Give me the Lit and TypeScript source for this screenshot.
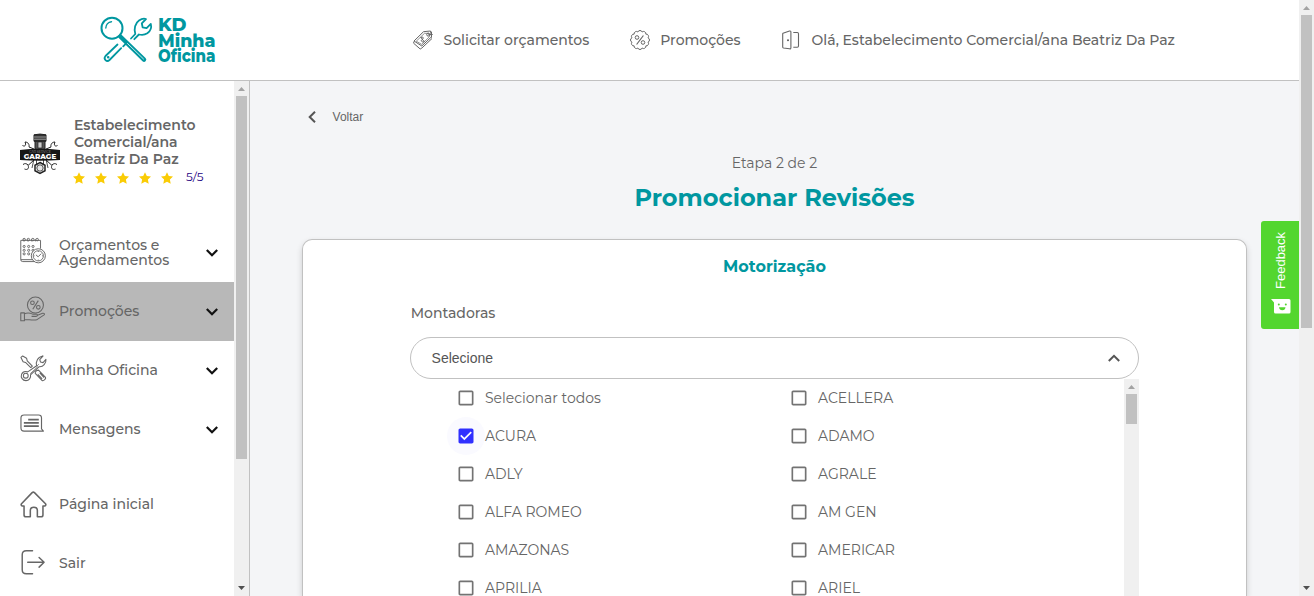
import { LitElement, html, css, svg } from "lit";
import { customElement, property } from "lit/decorators.js";
import { classMap } from "lit/directives/class-map.js";

@customElement("scroll-track")
class ScrollTrack extends LitElement {
  @property({ type: Number }) thumb = 30;
  @property({ type: Boolean }) endless = false;
  static styles = css`
    :host { display: flex; flex-direction: column; width: 15px; flex: none; background: #f0f0f0; }
    .btn { height: 15px; width: 15px; flex: none; display: block; }
    .thumb { width: 11px; margin: 0 2px; background: #c1c1c1; flex: none; }
    .rest { flex: 1; }
  `;
  render() {
    return html`
      <svg class="btn" viewBox="0 0 15 15"><path d="M4 10 7.5 6 11 10z" fill="#a3a3a3" /></svg>
      <div class="thumb" style="height:${this.thumb}px"></div>
      <div class="rest"></div>
      ${this.endless ? "" : html`<svg class="btn" viewBox="0 0 15 15"><path d="M4 5h7L7.5 9z" fill="#505050" /></svg>`}
    `;
  }
}

const logo = html`<svg class="logo" viewBox="0 0 118 50" fill="none" stroke="#0097a0" stroke-width="2" stroke-linecap="round" stroke-linejoin="round">
  <circle cx="12" cy="13.200" r="10.500" stroke-width="2" />
  <path d="M5.800 13a6.500 6.500 0 0 1 5.700-6.300" stroke-width="1.400" />
  <path d="M20.300 21.500 44 44.600" stroke-width="4.400" />
  <path d="M27.500 28.500 43.500 44" stroke="#fff" stroke-width=".8" />
  <path d="M31 23.500 35.300 19C33.600 13.700 35.300 8 39 5.500c2.300-1.600 4.800-2.200 7-1.500L41.800 8.300l.8 4 4 .8 4.200-4.200c.9 3.400-.6 7.200-3.500 9.400-2.900 2-5.500 2-8.400 1.200L34.300 24.200" stroke-width="1.800" />
  <path d="M21.200 33.200 9.500 45c-2.800 2.500-6.500-1-4-4L17.500 29.500M23.200 31.300l3-3" stroke-width="1.800" />
  <circle cx="8.200" cy="42.300" r=".7" stroke-width="1.200" />
  <g class="brand-name" fill="#0097a0" stroke="none">
    <text x="58" y="15.800" textLength="28.500" lengthAdjust="spacingAndGlyphs">KD</text>
    <text x="58" y="31.500" textLength="57.500" lengthAdjust="spacingAndGlyphs">Minha</text>
    <text x="58" y="47.200" textLength="57.500" lengthAdjust="spacingAndGlyphs">Oficina</text>
  </g>
</svg>`;

const tags = html`<svg class="nav-icon" viewBox="0 0 20 20" fill="none" stroke="#666" stroke-width="1">
  <path d="M1 11 10.500 1.700 17.500 1l1 5.800L8.800 16z" /><path d="M.8 11.500.7 13.300 7.200 19l1.700-1L19 8.500" />
  <path d="M3.300 11.200 11.500 3.300l4.500.1.500 3.200-7.800 7.800z" stroke-width=".7" />
  <circle cx="15.200" cy="4.600" r="1.500" /><path d="M15.500 4.500h4.200M18.500 1.700v6M8 7.500c2-1 3 .4 2 1.300s-2.500 1.500-1.300 2.600 2.200.4 2.600-.1M7.500 7l4 5" />
</svg>`;

const scallop = () => {
  const n = 12;
  let d = "";
  for (let i = 0; i <= n; i++) {
    const a = (i / n) * Math.PI * 2 + Math.PI / 12;
    const x = (10 + 8.3 * Math.cos(a)).toFixed(2);
    const y = (10 + 8.3 * Math.sin(a)).toFixed(2);
    d += i ? `A2.300 2.300 0 0 1 ${x} ${y}` : `M${x} ${y}`;
  }
  return d;
};
const badge = html`<svg class="nav-icon" viewBox="0 0 20 20" fill="none" stroke="#666" stroke-width="1">
  <path d=${scallop()} /><path d="M13.400 5.500 6.600 14.500" stroke-width="1.200" />
  <circle cx="7" cy="7.500" r="1.800" /><circle cx="13" cy="12.500" r="1.800" />
</svg>`;

const door = html`<svg class="nav-icon" viewBox="0 0 20 20" fill="none" stroke="#666" stroke-width="1.100" stroke-linejoin="round">
  <path d="M2 3.200 8.500 1Q9.900.8 9.900 2v15.800q0 1.300-1.400 1L2.500 18Q1.700 17.800 1.700 17V4q0-.6.3-.8zM12.300 2.500h4q1.200 0 1.200 1.200V16q0 1.200-1.200 1.200h-4" />
  <circle cx="7" cy="10.200" r=".5" fill="#666" />
</svg>`;

const calendar = html`<svg class="side-icon" viewBox="0 0 28 28" fill="none" stroke="#666" stroke-width="1">
  <path d="M14.500 23.500H.8V3.500h20.500v8.500M.8 23.500q0 2 2 2h12.500" />
  <path d="M4 2.500v2M8 2.500v2M12 2.500v2M16 2.500v2" /><circle cx="4.300" cy="2.700" r="1.300" /><circle cx="8.700" cy="2.700" r="1.300" /><circle cx="13.300" cy="2.700" r="1.300" /><circle cx="17.800" cy="2.700" r="1.300" />
  ${[9.8, 13.8, 17.5].map((y) => [4.3, 9, 13.5].map((x) => (x > 12 && y > 15 ? "" : svg`<circle cx=${x} cy=${y} r="1.100" />`)))}
  <circle cx="19" cy="19.500" r="7.300" fill="#fff" /><circle cx="19" cy="19.500" r="5.300" stroke-width=".9" />
  <path d="m16.500 18.500 2.300 2 3.200-3.200M19 14.500v1M19 23.500v1M14 19.500h1M23 19.500h1" />
</svg>`;

const hand = html`<svg class="side-icon" viewBox="0 0 28 28" fill="none" stroke="#666" stroke-width="1.100" stroke-linejoin="round">
  <circle cx="16" cy="9.300" r="8.300" /><path d="m19 4.800-5.800 9" />
  <circle cx="12.900" cy="7" r="1.900" /><circle cx="19" cy="11.700" r="1.900" />
  <path d="M.8 17.500h3.800v8.200H.8zM4.600 18.500c3.500-1.500 6-.8 8.500.3h4.200c1.300.5 1.300 2-.3 2.300h-5M17.500 20.300 23.500 18c1.500-.4 2.500.6 1.500 1.600L18 24.300c-3 1.500-8.500 0-13.400 0" />
</svg>`;

const tools = html`<svg class="side-icon" viewBox="0 0 28 28" fill="none" stroke="#666" stroke-width="1.100" stroke-linejoin="round">
  <path d="M1 2.500 2.800 1l4 2.300.7 2.700 5.300 5.500-1.600 1.500L5.700 7.700 3.200 7z" />
  <path d="m17.500 16 1.700-.3 7.300 7.500c.6 1.300-1.800 4-3.500 3.300l-7.200-7.500.2-1.600zM20.500 18.500l4.500 5M18.500 20l4.500 4.800" />
  <path d="M17.300 11.200C16 7 18.500 1.500 24 1l-3.500 3.700.8 2.600 2.600.6 3-3.300c.5 4-3 8-7 7.500l-9 8.500c.7 3-1.600 6-4.700 6-3.500 0-5.700-3.500-4.600-6.500.9-2.300 3.600-3.500 6.400-2.600z" fill="#fff" />
  <path d="m18.500 12-8 7.500M19.500 9.500l-2 2" stroke-width=".8" /><circle cx="6" cy="21.500" r="2.500" />
</svg>`;

const message = html`<svg class="side-icon" viewBox="0 0 28 28" fill="none" stroke="#666" stroke-width="1.200" stroke-linejoin="round">
  <path d="M22.300 15.500V4.200Q22.300 1 19.300 1H4.200Q1 1 1 4.200v10.300q0 3.200 3.200 3.200h20.100z" />
  <path d="M8.500 5.800h11M4 9.200h15.500M4 12.600h15.500" stroke-width="1.700" />
</svg>`;

const home = html`<svg class="side-icon home" viewBox="0 0 28 28" fill="none" stroke="#666" stroke-width="1.600" stroke-linejoin="round" stroke-linecap="round">
  <path d="M4.200 15.500H2.300Q.3 14.600 1.800 13L12.600 1.700q1.200-1 2.400 0L26.200 13q1.500 1.600-.5 2.500h-1.900v9.300q0 2-2 2h-3.800v-6.500c0-4.500-7.300-4.500-7.300 0v6.500h-4.500q-2 0-2-2z" />
</svg>`;

const exit = html`<svg class="side-icon exit" viewBox="0 0 28 28" fill="none" stroke="#666" stroke-width="1.500" stroke-linejoin="round" stroke-linecap="round">
  <path d="M13 1.800H6.500Q2.300 1.800 2.300 6v15.500q0 4.200 4.200 4.200H13M8 13.800h17M19.800 8.800l5.200 5-5.200 5" />
</svg>`;

const chevron = html`<svg class="chevron" viewBox="0 0 12 8" fill="none" stroke="#111" stroke-width="2.200"><path d="m.8 1 5.200 5.200L11.200 1" /></svg>`;

const garage = html`<svg class="garage" viewBox="0 0 40 40" fill="none" stroke="#222" stroke-width="1">
  <path d="M14 .8q6-1.500 12 0v6.500H14z" fill="#333" /><path d="M14 3h12M14 5.200h12" stroke="#bbb" stroke-width=".8" /><path d="M15 7.300h10v8H15z" fill="#555" /><path d="M18 8h4v6h-4z" fill="#ccc" stroke-width=".7" />
  <path d="M2.500 11.500C5 13 6.500 11 5 8c3.500 0 4.500 3 4 5l5 2M37.500 11.500C35 13 33.500 11 35 8c-3.500 0-4.500 3-4 5l-5 2M4.500 35c3 1.500 5-1 3.500-3.500L15 25M35.500 35c-3 1.500-5-1-3.500-3.500L25 25M3 30.500c2-1.500 3.500-1 5 .5M37 30.500c-2-1.500-3.500-1-5 .5" />
  <path d="M14 25 12 34M26 25l2 9M16.500 25v5M23.500 25v5" stroke-width=".8" /><path d="m20 28.500 5 2.800v5.400L20 39.500l-5-2.800v-5.400z" fill="#fff" stroke-width="1.500" /><circle cx="20" cy="34" r="3.200" fill="#e5e5e5" stroke-width=".8" />
  <path d="M0 16q20-2.500 40 0v10q-20 1.500-40 0z" fill="#161616" stroke="none" />
  <text x="20" y="18.900" font-size="3.200" fill="#999" stroke="none" text-anchor="middle">CAR SERVICE</text>
  <text x="20" y="25.400" font-size="7.800" font-weight="800" fill="#fff" stroke="none" text-anchor="middle" textLength="32.500" lengthAdjust="spacingAndGlyphs">GARAGE</text>
</svg>`;

const star = html`<svg class="star" viewBox="0 0 12 12"><path fill="#facc05" d="m6 .2 1.800 3.900 4.200.5-3.100 2.900.8 4.300L6 9.700l-3.700 2.100.8-4.300L0 4.600l4.200-.5z" /></svg>`;

const box = (on: boolean) =>
  on
    ? html`<svg class="box" viewBox="0 0 24 24"><path fill="#3030ff" d="M19 3H5c-1.110 0-2 .9-2 2v14c0 1.100.89 2 2 2h14c1.110 0 2-.9 2-2V5c0-1.100-.89-2-2-2zm-9 14l-5-5 1.410-1.410L10 14.170l7.590-7.590L19 8l-9 9z" /></svg>`
    : html`<svg class="box" viewBox="0 0 24 24"><path fill="#737373" d="M19 5v14H5V5h14m0-2H5c-1.100 0-2 .9-2 2v14c0 1.100.9 2 2 2h14c1.100 0 2-.9 2-2V5c0-1.100-.9-2-2-2z" /></svg>`;

const menu: { icon: unknown; lines: string[]; on?: boolean; open?: boolean; gap?: boolean }[] = [
  { icon: calendar, lines: ["Orçamentos e", "Agendamentos"], open: true },
  { icon: hand, lines: ["Promoções"], on: true, open: true },
  { icon: tools, lines: ["Minha Oficina"], open: true },
  { icon: message, lines: ["Mensagens"], open: true },
  { icon: home, lines: ["Página inicial"], gap: true },
  { icon: exit, lines: ["Sair"] },
];

const makers = [
  "Selecionar todos", "ACELLERA", "ACURA", "ADAMO", "ADLY", "AGRALE",
  "ALFA ROMEO", "AM GEN", "AMAZONAS", "AMERICAR", "APRILIA", "ARIEL",
];

@customElement("app-root")
class AppRoot extends LitElement {
  static styles = css`
    :host { display: flex; height: 596px; overflow: hidden; font-family: Montserrat, Inter, sans-serif; color: #666; font-size: 14px; }
    * { box-sizing: border-box; }
    svg { display: block; flex: none; overflow: visible; }
    .page { flex: 1; min-width: 0; display: flex; flex-direction: column; }
    header { height: 81px; flex: none; border-bottom: 1px solid #c1c1c1; background: #fff; display: flex; align-items: center; padding-left: 100px; }
    .brand { width: 313px; height: 50px; }
    .logo { width: 118px; height: 50px; }
    .brand-name { font-family: Montserrat, Inter, sans-serif; font-weight: 800; font-size: 18px; }
    .nav-item { display: flex; align-items: center; gap: 10.500px; font-weight: 500; line-height: 20px; margin-right: 40.500px; white-space: nowrap; }
    .nav-icon { width: 20px; height: 20px; }
    .body { flex: 1; min-height: 0; display: flex; }
    aside { width: 250px; flex: none; border-right: 1px solid #c1c1c1; display: flex; background: #fff; }
    .side { flex: 1; min-width: 0; }
    .profile { height: 142px; padding: 36px 0 0 20px; display: flex; gap: 14px; }
    .garage { width: 40px; height: 40px; margin-top: 17px; }
    .who { font-weight: 600; font-size: 14px; line-height: 17px; }
    .stars { display: flex; align-items: center; gap: 10px; height: 19px; margin-left: -1px; }
    .star { width: 12px; height: 12px; margin-top: 1px; }
    .score { font-size: 12px; font-weight: 400; color: #1c0080; margin-left: 3px; line-height: 14px; margin-top: -1px; }
    .item { height: 59px; display: flex; align-items: center; padding: 0 16px 0 20px; font-weight: 500; font-size: 14px; line-height: 15px; }
    .item.on { background: #b8b8b8; }
    .item.gap { margin-top: 16px; }
    .item .text { flex: 1; margin-left: 12px; }
    .side-icon { width: 27px; height: 27px; margin-top: -4px; }
    .side-icon.home { margin-top: -1px; }
    .side-icon.exit { margin-top: -3px; }
    .chevron { width: 12px; height: 8px; margin-top: 1px; }
    main { flex: 1; min-width: 0; background: #f4f5f7; padding: 26px 52px 0; display: flex; flex-direction: column; }
    .back { display: flex; align-items: center; gap: 17px; height: 20px; padding-left: 5.600px; font: 12px/20px "Liberation Sans", sans-serif; }
    .step { align-self: center; margin-top: 26px; line-height: 20px; font-size: 14px; }
    h1 { margin: 9px 0 0; align-self: center; color: #0097a0; font-size: 24px; line-height: 32px; font-weight: 700; }
    .card { flex: 1; margin-top: 25px; border: 1px solid #c1c1c1; border-bottom: 0; border-radius: 10px 10px 0 0; background: #fff; box-shadow: 0 3px 6px rgba(0, 0, 0, 0.16); padding: 17px 107px 0; display: flex; flex-direction: column; min-height: 0; }
    h2 { margin: 0; align-self: center; color: #0097a0; font-size: 16px; line-height: 20px; font-weight: 700; }
    .field { margin: 26px 0 14px .7px; font-weight: 500; line-height: 20px; }
    .select { height: 42px; flex: none; border: 1px solid #c1c1c1; border-radius: 21px; display: flex; align-items: center; justify-content: space-between; padding: 0 18px 0 20.600px; font: 14px/20px "Liberation Sans", sans-serif; color: #555; }
    .list { display: flex; flex: 1; min-height: 0; }
    .grid { flex: 1; display: grid; grid-template-columns: 333px 333px; grid-auto-rows: 38px; padding-left: 37px; overflow: hidden; }
    .opt { display: flex; align-items: center; font-size: 14px; font-weight: 400; color: #666; line-height: 20px; }
    .halo { width: 38px; height: 38px; border-radius: 50%; display: flex; align-items: center; justify-content: center; }
    .halo.on { background: #fafaff; }
    .box { width: 20px; height: 20px; }
    .feedback { position: absolute; left: 1261px; top: 220.500px; width: 38px; height: 108.500px; background: #53d62f; border-radius: 3px 0 0 3px; display: flex; flex-direction: column; align-items: center; padding: 10.500px 0 0 1px; gap: 9.500px; color: #fff; }
    .vertical { writing-mode: vertical-rl; transform: rotate(180deg); font: 13px/16px "Liberation Sans", sans-serif; height: 58px; }
  `;
  render() {
    return html`
      <div class="page">
        <header>
          <div class="brand">${logo}</div>
          <div class="nav-item">${tags}<span>Solicitar orçamentos</span></div>
          <div class="nav-item">${badge}<span>Promoções</span></div>
          <div class="nav-item">${door}<span>Olá, Estabelecimento Comercial/ana Beatriz Da Paz</span></div>
        </header>
        <div class="body">
          <aside>
            <div class="side">
              <div class="profile">
                ${garage}
                <div class="who">
                  <div>Estabelecimento</div>
                  <div>Comercial/ana</div>
                  <div>Beatriz Da Paz</div>
                  <div class="stars">${[0, 1, 2, 3, 4].map(() => star)}<span class="score">5/5</span></div>
                </div>
              </div>
              ${menu.map(
                (m) => html`<div class=${classMap({ item: true, on: !!m.on, gap: !!m.gap })}>
                  ${m.icon}
                  <div class="text">${m.lines.map((l, i) => (i ? html`<br />${l}` : l))}</div>
                  ${m.open ? chevron : ""}
                </div>`
              )}
            </div>
            <scroll-track .thumb=${363}></scroll-track>
          </aside>
          <main>
            <div class="back">
              <svg width="8" height="12" viewBox="0 0 8 12" fill="none" stroke="#555" stroke-width="2"><path d="M7 .8 1.700 6 7 11.200" /></svg>
              Voltar
            </div>
            <div class="step">Etapa 2 de 2</div>
            <h1>Promocionar Revisões</h1>
            <div class="card">
              <h2>Motorização</h2>
              <div class="field">Montadoras</div>
              <div class="select">
                Selecione
                <svg width="12" height="8" viewBox="0 0 12 8" fill="none" stroke="#555" stroke-width="2"><path d="M.8 7 6 1.800 11.200 7" /></svg>
              </div>
              <div class="list">
                <div class="grid">
                  ${makers.map(
                    (m) => html`<div class="opt">
                      <div class=${classMap({ halo: true, on: m === "ACURA" })}>${box(m === "ACURA")}</div>
                      <span>${m}</span>
                    </div>`
                  )}
                </div>
                <scroll-track .thumb=${30} .endless=${true}></scroll-track>
              </div>
            </div>
          </main>
        </div>
      </div>
      <scroll-track .thumb=${313}></scroll-track>
      <div class="feedback">
        <span class="vertical">Feedback</span>
        <svg width="20" height="15" viewBox="0 0 20 15"><path fill="#fff" d="M0 0h18q1.500 0 1.500 1.500V13q0 1.500-1.500 1.500H4.500Q3 14.500 3 13V3.500z" /><circle cx="7.800" cy="5.500" r="1" fill="#53d62f" /><circle cx="14.800" cy="5.500" r="1" fill="#53d62f" /><path fill="#53d62f" d="M8 8.300h6.500q-.3 3-3.200 3t-3.300-3z" /></svg>
      </div>
    `;
  }
}
